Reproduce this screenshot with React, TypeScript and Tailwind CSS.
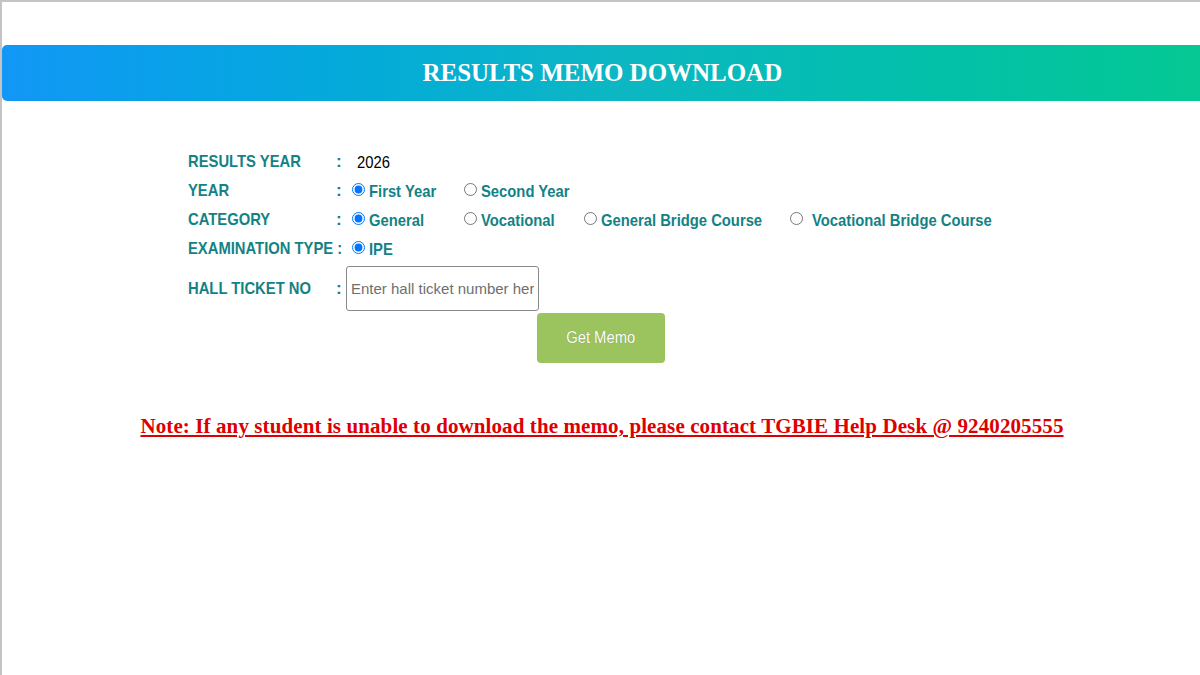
import React from "react";

const teal = "text-[#138285]";

function T({ children, className = "" }: { children: React.ReactNode; className?: string }) {
  return <span className={`inline-block whitespace-nowrap origin-left scale-x-[0.87] ${className}`}>{children}</span>;
}

function Radio({ label, checked, name, gap = "ml-[4px]" }: { label: string; checked?: boolean; name: string; gap?: string }) {
  return (
    <label className={`flex items-center ${teal} font-bold`}>
      <input type="radio" name={name} defaultChecked={checked} className="m-0 w-[13px] h-[13px] -translate-y-[2px] shrink-0" />
      <span className={gap}>
        <T className="translate-y-[1px]">{label}</T>
      </span>
    </label>
  );
}

function Row({ label, children, className = "", colon = true }: { label: string; children: React.ReactNode; className?: string; colon?: boolean }) {
  return (
    <div className={`flex items-center ${className}`}>
      <div className={`w-[148px] ${teal} font-bold`}>
        <T>{label}</T>
      </div>
      <div className={`w-[16px] ${teal} font-bold`}>{colon ? ":" : ""}</div>
      <div className="flex items-center">{children}</div>
    </div>
  );
}

export default function App() {
  return (
    <div className="w-[1200px] h-[675px] bg-white border-t-2 border-l-2 border-[#c4c4c4] overflow-hidden font-['Liberation_Sans',Arial,sans-serif]">
      <div className="mt-[43px] h-[56px] rounded-l-[5px] bg-gradient-to-r from-[#1297f6] via-[#0db6c4] to-[#05c893] flex items-center justify-center">
        <h1 className="text-white font-bold text-[26px] leading-[30px] font-['Liberation_Serif','Times_New_Roman',serif] scale-x-[0.96] translate-x-[1px]">
          RESULTS MEMO DOWNLOAD
        </h1>
      </div>

      <div className="pl-[186px] pt-[51px] text-[17px] leading-[20px]">
        <Row label="RESULTS YEAR" className="h-[20px]">
          <span className="text-black ml-[5px] translate-y-[1px]">
            <T>2026</T>
          </span>
        </Row>
        <Row label="YEAR" className="mt-[9px] h-[20px]">
          <div className="w-[112px]"><Radio name="year" label="First Year" checked /></div>
          <Radio name="year" label="Second Year" />
        </Row>
        <Row label="CATEGORY" className="mt-[9px] h-[20px]">
          <div className="w-[112px]"><Radio name="cat" label="General" checked /></div>
          <div className="w-[120px]"><Radio name="cat" label="Vocational" /></div>
          <div className="w-[206px]"><Radio name="cat" label="General Bridge Course" /></div>
          <Radio name="cat" label="Vocational Bridge Course" gap="ml-[9px]" />
        </Row>
        <Row label="EXAMINATION TYPE :" colon={false} className="mt-[9px] h-[20px]">
          <Radio name="exam" label="IPE" checked />
        </Row>
        <div className="flex items-center mt-[7px]">
          <div className={`w-[148px] ${teal} font-bold`}>
            <T>HALL TICKET NO</T>
          </div>
          <div className={`w-[10px] ${teal} font-bold`}>:</div>
          <input
            type="text"
            placeholder="Enter hall ticket number here"
            className="w-[193px] h-[45px] border border-[#8a8a8a] rounded-[3px] px-[4px] text-[15px] placeholder:text-[#6f6f6f] outline-none"
          />
        </div>
        <div className="pl-[349px] mt-[2px]">
          <button className="w-[128px] h-[50px] bg-[#9bc45e] rounded-[4px] text-white text-[17px] [text-shadow:0_0_1px_rgba(0,0,0,0.3)]">
            <span className="inline-block scale-x-[0.87]">Get Memo</span>
          </button>
        </div>
      </div>

      <p className="mt-[48px] text-center text-[#dd0000] underline font-bold text-[21px] tracking-[0.1px] font-['Liberation_Serif','Times_New_Roman',serif] pl-[2px]">
        Note: If any student is unable to download the memo, please contact TGBIE Help Desk @ 9240205555
      </p>
    </div>
  );
}
